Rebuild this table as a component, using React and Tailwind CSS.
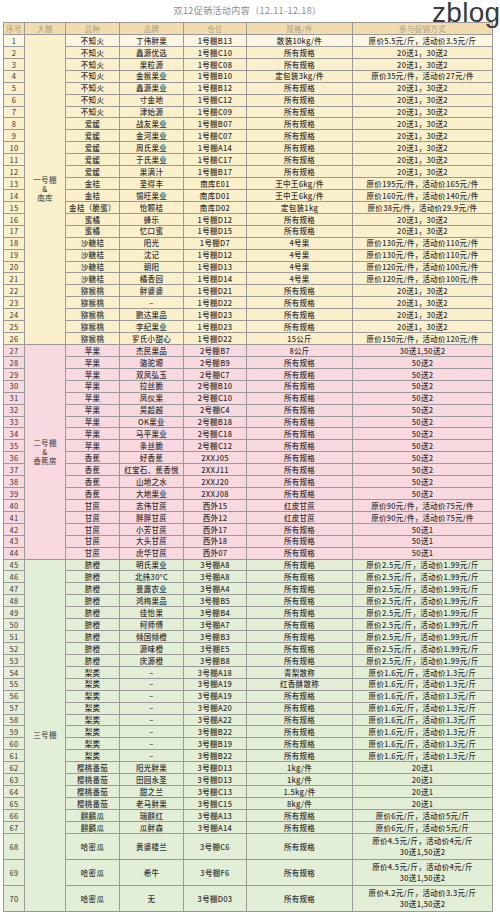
import React from 'react'

const S = '所有规格'
const G1 = '20送1，30送2'

const rows = [
  ['不知火', '丁伟鲜果', '1号棚B13', '散装10kg/件', '原价5.5元/斤，活动价3.5元/斤'],
  ['不知火', '鑫源优选', '1号棚C10', S, G1],
  ['不知火', '果粒源', '1号棚C08', S, G1],
  ['不知火', '金猴果业', '1号棚B10', '定包装3kg/件', '原价35元/件，活动价27元/件'],
  ['不知火', '鑫源果业', '1号棚B12', S, G1],
  ['不知火', '寸金地', '1号棚C12', S, G1],
  ['不知火', '津始源', '1号棚C09', S, G1],
  ['爱媛', '战友果业', '1号棚B07', S, G1],
  ['爱媛', '金河果业', '1号棚C07', S, G1],
  ['爱媛', '周氏果业', '1号棚A14', S, G1],
  ['爱媛', '于氏果业', '1号棚C17', S, G1],
  ['爱媛', '果满汁', '1号棚B17', S, G1],
  ['金桔', '圣得丰', '南库E01', '王中王6kg/件', '原价195元/件，活动价165元/件'],
  ['金桔', '锡旺果业', '南库D01', '王中王6kg/件', '原价160元/件，活动价140元/件'],
  ['金桔（脆蜜）', '怡颗桔', '南库D02', '定包装1kg', '原价38元/件，活动价29.9元/件'],
  ['蜜橘', '蜂乐', '1号棚D12', S, G1],
  ['蜜橘', '忆口蜜', '1号棚D15', S, G1],
  ['沙糖桔', '阳光', '1号棚D7', '4号果', '原价130元/件，活动价110元/件'],
  ['沙糖桔', '沈记', '1号棚D12', '4号果', '原价130元/件，活动价110元/件'],
  ['沙糖桔', '朝阳', '1号棚D13', '4号果', '原价120元/件，活动价100元/件'],
  ['沙糖桔', '橘香园', '1号棚D14', '4号果', '原价120元/件，活动价100元/件'],
  ['猕猴桃', '鲜婆婆', '1号棚D21', S, G1],
  ['猕猴桃', '–', '1号棚D22', S, G1],
  ['猕猴桃', '鹏达果品', '1号棚D23', S, G1],
  ['猕猴桃', '李纪果业', '1号棚D23', S, G1],
  ['猕猴桃', '罗氏小甜心', '1号棚D22', '15公斤', '原价150元/件，活动价120元/件'],
  ['苹果', '杰民果品', '2号棚B7', '8公斤', '30送1,50送2'],
  ['苹果', '骆驼塬', '2号棚B9', S, '50送2'],
  ['苹果', '双凤弘玉', '2号棚C7', S, '50送2'],
  ['苹果', '拉丝脆', '2号棚B10', S, '50送2'],
  ['苹果', '凤仪果', '2号棚C10', S, '50送2'],
  ['苹果', '昊超越', '2号棚C4', S, '50送2'],
  ['苹果', 'OK果业', '2号棚B18', S, '50送2'],
  ['苹果', '马平果业', '2号棚C18', S, '50送2'],
  ['苹果', '条丝脆', '2号棚C12', S, '50送2'],
  ['香蕉', '好香蕉', '2XXJ05', S, '50送2'],
  ['香蕉', '红宝石、蕉香悦', '2XXJ11', S, '50送2'],
  ['香蕉', '山地之水', '2XXJ20', S, '50送2'],
  ['香蕉', '大地果业', '2XXJ08', S, '50送2'],
  ['甘蔗', '志伟甘蔗', '西外15', '红皮甘蔗', '原价90元/件，活动价75元/件'],
  ['甘蔗', '胖胖甘蔗', '西外12', '红皮甘蔗', '原价90元/件，活动价75元/件'],
  ['甘蔗', '小芳甘蔗', '西外17', S, '50送1'],
  ['甘蔗', '大头甘蔗', '西外18', S, '50送1'],
  ['甘蔗', '虎华甘蔗', '西外07', S, '50送1'],
  ['脐橙', '明氏果业', '3号棚A8', S, '原价2.5元/斤，活动价1.99元/斤'],
  ['脐橙', '北纬30°C', '3号棚A8', S, '原价2.5元/斤，活动价1.99元/斤'],
  ['脐橙', '曼露农业', '3号棚A4', S, '原价2.5元/斤，活动价1.99元/斤'],
  ['脐橙', '鸿梅果品', '3号棚B5', S, '原价2.5元/斤，活动价1.99元/斤'],
  ['脐橙', '佳怡果', '3号棚B4', S, '原价2.5元/斤，活动价1.99元/斤'],
  ['脐橙', '柯师傅', '3号棚A7', S, '原价2.5元/斤，活动价1.99元/斤'],
  ['脐橙', '倾国倾橙', '3号棚B3', S, '原价2.5元/斤，活动价1.99元/斤'],
  ['脐橙', '源味橙', '3号棚E5', S, '原价2.5元/斤，活动价1.99元/斤'],
  ['脐橙', '庆源橙', '3号棚B8', S, '原价2.5元/斤，活动价1.99元/斤'],
  ['梨类', '–', '3号棚A18', '青梨散称', '原价1.6元/斤，活动价1.3元/斤'],
  ['梨类', '–', '3号棚A19', '红香酥散称', '原价1.6元/斤，活动价1.3元/斤'],
  ['梨类', '–', '3号棚A19', S, '原价1.6元/斤，活动价1.3元/斤'],
  ['梨类', '–', '3号棚A20', S, '原价1.6元/斤，活动价1.3元/斤'],
  ['梨类', '–', '3号棚A22', S, '原价1.6元/斤，活动价1.3元/斤'],
  ['梨类', '–', '3号棚B22', S, '原价1.6元/斤，活动价1.3元/斤'],
  ['梨类', '–', '3号棚B19', S, '原价1.6元/斤，活动价1.3元/斤'],
  ['梨类', '–', '3号棚B22', S, '原价1.6元/斤，活动价1.3元/斤'],
  ['樱桃番茄', '阳光鲜果', '3号棚D13', '1kg/件', '20送1'],
  ['樱桃番茄', '田园永圣', '3号棚D13', '1kg/件', '20送1'],
  ['樱桃番茄', '甜之兰', '3号棚C13', '1.5kg/件', '20送1'],
  ['樱桃番茄', '老马鲜果', '3号棚C15', '8kg/件', '20送1'],
  ['麒麟瓜', '瑞麒红', '3号棚A13', S, '原价6元/斤，活动价5元/斤'],
  ['麒麟瓜', '瓜鲜森', '3号棚A14', S, '原价6元/斤，活动价5元/斤'],
  ['哈密瓜', '黄婆楼兰', '3号棚C6', S, '原价4.5元/斤，活动价4元/斤', true],
  ['哈密瓜', '希牛', '3号棚F6', S, '原价4.5元/斤，活动价4元/斤', true],
  ['哈密瓜', '无', '3号棚D03', S, '原价4.2元/斤，活动价3.3元/斤', true],
]

// which rows open a 大棚 group and how many rows it spans
const groups = {
  0: { span: 26, label: ['一号棚', '&', '南库'] },
  26: { span: 18, label: ['二号棚', '&', '香蕉房'] },
  44: { span: 26, label: ['三号棚'] },
}

function rowBg(i) {
  if (i === 0) return 'bg-[#fcf6e2]'
  if (i < 26) return 'bg-[#fbf0cc]'
  if (i < 44) return 'bg-[#f9d9e0]'
  return 'bg-[#e3eed6]'
}

function groupBg(i) {
  if (i < 26) return 'bg-[#fbf0cc]'
  if (i < 44) return 'bg-[#f9d9e0]'
  return 'bg-[#e3eed6]'
}

const cell = 'border border-[#9a9a9a] p-0 text-center align-middle whitespace-nowrap'

export default function App() {
  return (
    <div className="relative w-[500px] bg-white font-['Noto_Sans_CJK_SC','Noto_Sans',sans-serif]">
      <div className="absolute left-[432px] top-[-1px] text-[28px] leading-none text-[#3a3a3a] font-['Liberation_Sans',sans-serif] tracking-[0.3px]">
        zblog
      </div>
      <div className="h-[22px] pl-[3px] w-[492px] flex items-center justify-center text-[9px] text-[#8c8c8c] tracking-[0.4px]">
        双12促销活动内容（12.11-12.18）
      </div>
      <table className="ml-[3px] w-[489px] table-fixed border-collapse text-[7.5px] leading-none tracking-[0.3px] text-[#333]">
        <colgroup>
          <col className="w-[21px]" />
          <col className="w-[41px]" />
          <col className="w-[54px]" />
          <col className="w-[64px]" />
          <col className="w-[63px]" />
          <col className="w-[106px]" />
          <col className="w-[140px]" />
        </colgroup>
        <thead>
          <tr className="h-[12px] bg-[#f2dcae] text-[#ab9c80]">
            {['序号', '大棚', '品种', '品牌', '仓位', '规格/件', '参与促销方式'].map((h) => (
              <th key={h} className={cell + ' font-normal'}>{h}</th>
            ))}
          </tr>
        </thead>
        <tbody>
          {rows.map((r, i) => {
            const g = groups[i]
            const tall = r[5]
            return (
              <tr key={i} className={(tall ? 'h-[26px] ' : 'h-[11.93px] ') + rowBg(i) + ' font-medium'}>
                <td className={cell + ' font-normal'}>{i + 1}</td>
                {g && (
                  <td rowSpan={g.span} className={cell + ' ' + groupBg(i) + ' font-normal'}>
                    <div className="flex flex-col items-center gap-[1px]">
                      {g.label.map((l) => (
                        <span key={l} className="leading-[8px]">{l}</span>
                      ))}
                    </div>
                  </td>
                )}
                <td className={cell}>{r[0]}</td>
                <td className={cell}>{r[1]}</td>
                <td className={cell}>{r[2]}</td>
                <td className={cell}>{r[3]}</td>
                <td className={cell}>
                  {tall ? (
                    <div className="flex flex-col items-center gap-[3px]">
                      <span>{r[4]}</span>
                      <span>30送1,50送2</span>
                    </div>
                  ) : (
                    r[4]
                  )}
                </td>
              </tr>
            )
          })}
        </tbody>
      </table>
    </div>
  )
}
